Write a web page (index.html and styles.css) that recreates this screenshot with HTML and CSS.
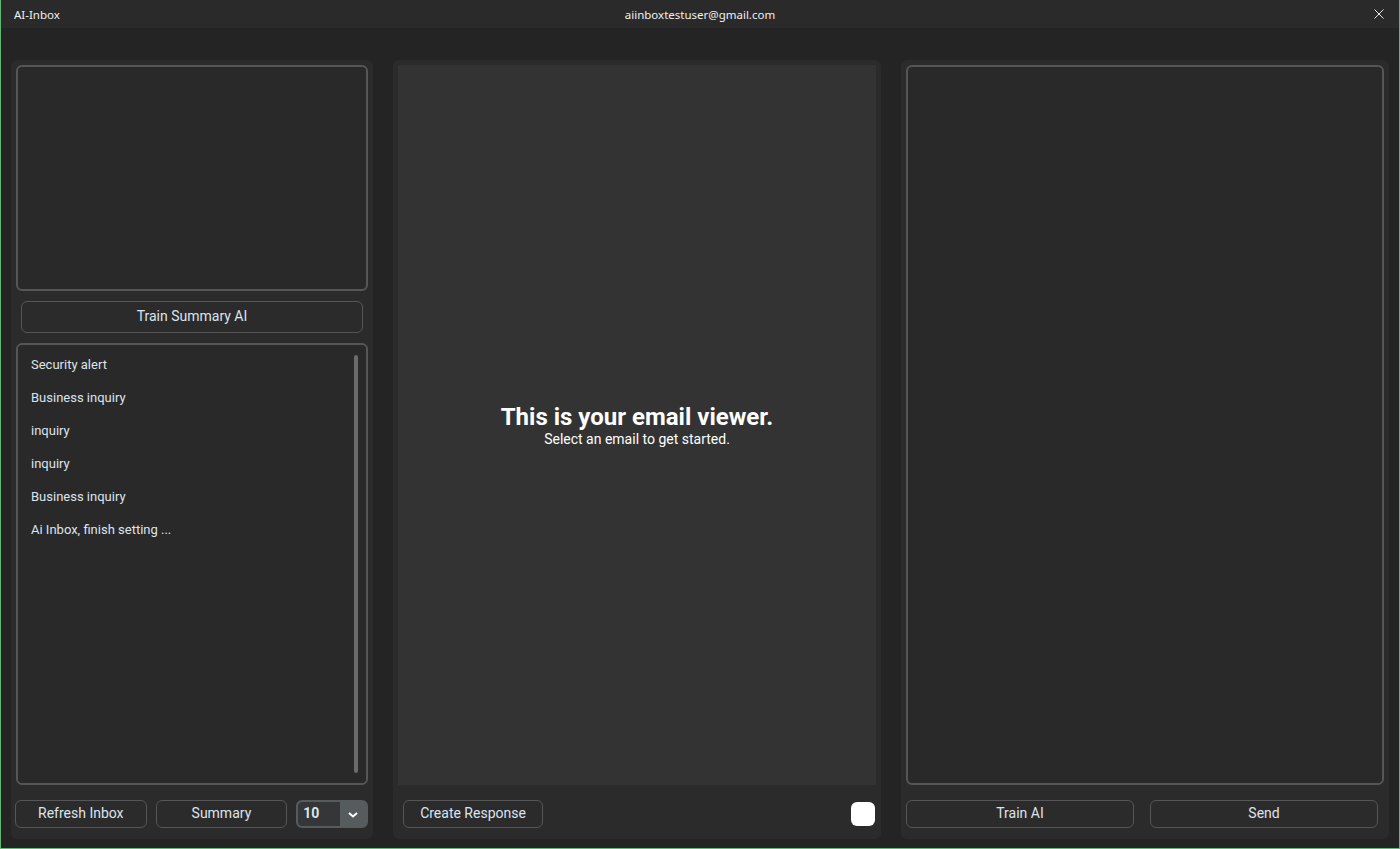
FILE: index.html
```html
<!DOCTYPE html>
<html lang="en">
<head>
<meta charset="utf-8">
<title>AI-Inbox</title>
<link rel="stylesheet" href="styles.css">
</head>
<body>
<div class="window">
  <div class="titlebar">
    <div class="app-name">AI-Inbox</div>
    <div class="account">aiinboxtestuser@gmail.com</div>
    <div class="tb-right">
      <svg class="close" width="10" height="10" viewBox="0 0 10 10"><path d="M0.5 0.5 L9.5 9.5 M9.5 0.5 L0.5 9.5" stroke="#e6e6e6" stroke-width="1" fill="none"/></svg>
    </div>
  </div>
  <div class="main">
    <section class="frame frame-left">
      <div class="textbox summary-box"></div>
      <button class="btn btn-wide">Train Summary AI</button>
      <div class="textbox list-box">
        <ul class="mail-list">
          <li>Security alert</li>
          <li>Business inquiry</li>
          <li>inquiry</li>
          <li>inquiry</li>
          <li>Business inquiry</li>
          <li>Ai Inbox, finish setting ...</li>
        </ul>
        <div class="scrollbar"></div>
      </div>
      <div class="row row-left">
        <button class="btn btn-refresh">Refresh Inbox</button>
        <button class="btn btn-summary">Summary</button>
        <div class="combo">
          <span class="combo-value">10</span>
          <span class="combo-arrow"><svg width="10" height="6" viewBox="0 0 10 6"><path d="M1 1 L5 4.5 L9 1" stroke="#ffffff" stroke-width="2" fill="none"/></svg></span>
        </div>
      </div>
    </section>
    <section class="frame frame-mid">
      <div class="viewer">
        <div class="viewer-title">This is your email viewer.</div>
        <div class="viewer-sub">Select an email to get started.</div>
      </div>
      <div class="row row-mid">
        <button class="btn btn-create">Create Response</button>
        <div class="check"></div>
      </div>
    </section>
    <section class="frame frame-right">
      <div class="textbox reply-box"></div>
      <div class="row row-right">
        <button class="btn btn-half">Train AI</button>
        <button class="btn btn-half">Send</button>
      </div>
    </section>
  </div>
</div>
</body>
</html>
```

FILE: styles.css
```css
* { box-sizing: border-box; }
html, body { margin: 0; padding: 0; background: #242424; }
body { font-family: Roboto, "Noto Sans", sans-serif; color: #dce4ee; }

.window {
  width: 1400px;
  height: 849px;
  background: #242424;
  border-left: 1px solid #62b873;
  border-right: 1px solid #62b873;
  border-bottom: 1px solid #62b873;
  display: flex;
  flex-direction: column;
}

.titlebar {
  height: 28px;
  flex: none;
  background: #2a2a2a;
  display: grid;
  grid-template-columns: 1fr auto 1fr;
  align-items: center;
  font-family: "Noto Sans", "Open Sans", sans-serif;
  font-size: 11.5px;
  color: #f0f0f0;
}
.app-name { padding-left: 13px; }
.account { text-align: center; }
.tb-right { display: flex; justify-content: flex-end; padding-right: 15px; }
.close { display: block; }

.main {
  flex: 1;
  display: flex;
  gap: 20px;
  padding: 32px 10px 9px 10px;
}

.frame {
  background: #2b2b2b;
  border-radius: 6px;
  display: flex;
  flex-direction: column;
  padding: 5px 5px 10px 5px;
}
.frame-left { width: 362px; }
.frame-mid, .frame-right { width: 488px; }

.textbox {
  background: #292929;
  border: 2px solid #565656;
  border-radius: 6px;
}
.summary-box { height: 226px; flex: none; }
.list-box {
  height: 442px;
  flex: none;
  margin-top: 10px;
  display: flex;
}
.reply-box { height: 720px; flex: none; }

.btn {
  font-family: Roboto, sans-serif;
  font-size: 14px;
  color: #dce4ee;
  background: #2b2b2b;
  border: 1px solid #565656;
  border-radius: 6px;
  padding: 0 0 2px 0;
  height: 28px;
}
.btn-wide {
  height: 32px;
  margin: 10px 5px 0 5px;
  flex: none;
}

.mail-list {
  list-style: none;
  margin: 0;
  padding: 3px 0 0 13px;
  flex: 1;
  font-size: 13px;
  color: #dce4ee;
}
.mail-list li { height: 33px; line-height: 33px; }

.scrollbar {
  width: 4px;
  margin: 10px 8px 10px 0;
  background: #6b6b6b;
  border-radius: 2px;
}

.row {
  display: flex;
  align-items: center;
  height: 28px;
  margin-top: 15px;
  flex: none;
}
.row-left { margin-left: -1px; gap: 9px; }
.btn-refresh, .btn-summary { width: 132px; }

.combo {
  width: 72px;
  height: 28px;
  border: 2px solid #565b5e;
  border-radius: 6px;
  background: #565b5e;
  display: flex;
  overflow: hidden;
}
.combo-value {
  width: 42px;
  background: #343638;
  border-radius: 4px 0 0 4px;
  font-size: 14px;
  font-weight: 700;
  color: #dce4ee;
  padding-left: 5px;
  line-height: 23px;
}
.combo-arrow {
  flex: 1;
  display: flex;
  align-items: center;
  justify-content: center;
  padding-top: 1px;
}

.viewer {
  height: 720px;
  flex: none;
  width: 478px;
  background: #333333;
  display: flex;
  flex-direction: column;
  align-items: center;
  justify-content: center;
  padding-top: 0;
}
.viewer-title {
  font-size: 24px;
  font-weight: 700;
  color: #ffffff;
  line-height: 28px;
}
.viewer-sub {
  font-size: 14px;
  color: #ffffff;
  line-height: 17px;
}

.row-mid { justify-content: space-between; padding: 0 1px 0 5px; }
.btn-create { width: 140px; }
.check {
  width: 24px;
  height: 24px;
  background: #ffffff;
  border-radius: 6px;
}

.row-right { justify-content: space-between; padding-right: 6px; }
.btn-half { width: 228px; }
```
